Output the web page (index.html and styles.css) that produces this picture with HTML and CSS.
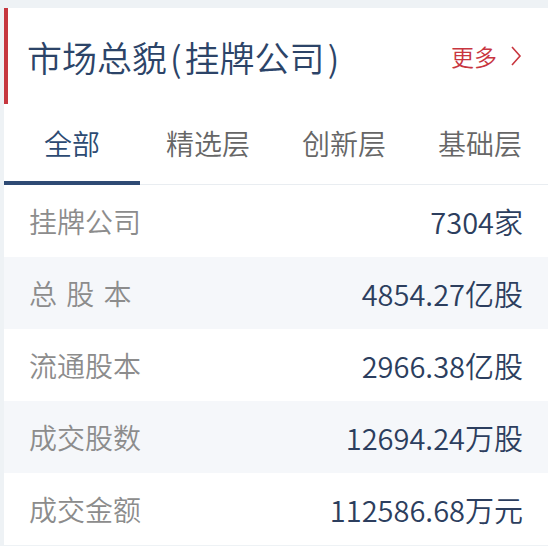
FILE: index.html
```html
<!DOCTYPE html>
<html lang="zh-CN">
<head>
  <meta charset="UTF-8" />
  <title>市场总貌</title>
  <link rel="stylesheet" href="styles.css">
</head>
<body>
  <div class="panel">
    <div class="panel-head">
      <div class="panel-title">市场总貌<span class="paren">(</span>挂牌公司<span class="paren">)</span></div>
      <div class="more">更多
        <svg class="chev" width="12" height="22" viewBox="0 0 12 22">
          <polyline points="2,2 10,11 2,20" fill="none" stroke="#c8363f" stroke-width="1.6" />
        </svg>
      </div>
    </div>

    <div class="tabs">
      <div class="tab active">全部</div>
      <div class="tab">精选层</div>
      <div class="tab">创新层</div>
      <div class="tab">基础层</div>
    </div>

    <div class="rows">
      <div class="row">
        <span class="label">挂牌公司</span>
        <span class="value">7304家</span>
      </div>
      <div class="row">
        <span class="label spaced">总 股 本</span>
        <span class="value">4854.27亿股</span>
      </div>
      <div class="row">
        <span class="label">流通股本</span>
        <span class="value">2966.38亿股</span>
      </div>
      <div class="row">
        <span class="label">成交股数</span>
        <span class="value">12694.24万股</span>
      </div>
      <div class="row">
        <span class="label">成交金额</span>
        <span class="value">112586.68万元</span>
      </div>
    </div>
  </div>
</body>
</html>
```

FILE: styles.css
```css
* { box-sizing: border-box; }
body {
  margin: 0;
  background: #eef2f5;
  font-family: "Noto Sans CJK SC", "Noto Sans", sans-serif;
  font-weight: 350;
  overflow: hidden;
}

.panel {
  margin: 8px 0 0 4px;
  background: #ffffff;
}

.panel-head {
  height: 96px;
  display: flex;
  align-items: center;
  justify-content: space-between;
  border-left: 4px solid #c6373f;
  padding: 0 26px 0 19px;
}

.panel-title {
  font-size: 35px;
  color: #2c4468;
}

.paren {
  margin: 0 3px;
}

.more {
  display: flex;
  align-items: center;
  font-size: 23px;
  color: #c8363f;
}

.chev {
  margin-left: 13px;
}

.tabs {
  display: flex;
  border-bottom: 1px solid #e9edf1;
}

.tab {
  flex: 1;
  height: 81px;
  padding-top: 19px;
  text-align: center;
  font-size: 28px;
  color: #666666;
  border-bottom: 4px solid transparent;
  margin-bottom: -1px;
}

.tab.active {
  color: #2c4a72;
  border-bottom-color: #2e4a74;
}

.row {
  height: 72px;
  display: flex;
  align-items: center;
  justify-content: space-between;
  padding: 0 25px;
}

.row:nth-child(even) {
  background: #f5f7fa;
}

.label {
  font-size: 28px;
  color: #8c8c8c;
}

.label.spaced {
  word-spacing: 3px;
}

.value {
  font-size: 29px;
  color: #2c3e5e;
}
```
